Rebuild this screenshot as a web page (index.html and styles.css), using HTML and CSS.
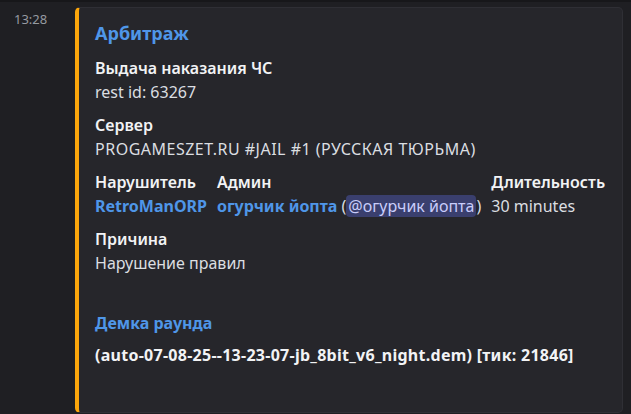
FILE: index.html
```html
<!DOCTYPE html>
<html lang="ru">
<head>
<meta charset="utf-8">
<link rel="stylesheet" href="styles.css">
</head>
<body>
<div class="topbar"></div>
<div class="message">
  <div class="time">13:28</div>
  <div class="embed">
    <div class="title">Арбитраж</div>
    <div class="fields">
      <div class="field">
        <div class="name">Выдача наказания ЧС</div>
        <div class="value">rest id: 63267</div>
      </div>
      <div class="field">
        <div class="name">Сервер</div>
        <div class="value caps">PROGAMESZET.RU #JAIL #1 (РУССКАЯ ТЮРЬМА)</div>
      </div>
      <div class="row">
        <div class="field">
          <div class="name">Нарушитель</div>
          <div class="value"><span class="link">RetroManORP</span></div>
        </div>
        <div class="field">
          <div class="name">Админ</div>
          <div class="value"><span class="link">огурчик йопта</span> (<span class="mention">@огурчик йопта</span>)</div>
        </div>
        <div class="field">
          <div class="name">Длительность</div>
          <div class="value">30 minutes</div>
        </div>
      </div>
      <div class="field">
        <div class="name">Причина</div>
        <div class="value">Нарушение правил</div>
      </div>
    </div>
    <div class="demo">
      <div class="demo-title">Демка раунда</div>
      <div class="desc">(auto-07-08-25--13-23-07-jb_8bit_v6_night.dem) [тик: 21846]</div>
    </div>
  </div>
</div>
</body>
</html>
```
FILE: styles.css
```css
html, body {
  margin: 0;
  padding: 0;
}
body {
  background: #1f1f23;
  font-family: "Noto Sans", "Liberation Sans", sans-serif;
  color: #dbdee1;
  height: 414px;
  overflow: hidden;
}
.topbar {
  height: 2px;
  background: #17171a;
}
.message {
  display: flex;
  padding: 5px 0 0 14px;
}
.time {
  width: 61px;
  flex: none;
  font-size: 13px;
  line-height: 22px;
  margin-top: 1px;
  color: #969aa1;
}
.embed {
  width: 548px;
  height: 406px;
  box-sizing: border-box;
  background: #26262b;
  border: 1px solid #2f2f35;
  border-left: 4px solid #fca60b;
  border-radius: 5px;
  padding: 12px 16px 0 16px;
}
.title {
  font-size: 18px;
  line-height: 26px;
  font-weight: 700;
  color: #4f96e8;
}
.fields {
  display: flex;
  flex-direction: column;
  gap: 11px;
  margin-top: 11px;
}
.row {
  display: flex;
  gap: 10px;
}
.name {
  font-size: 16px;
  line-height: 22px;
  font-weight: 600;
  color: #f2f3f5;
  margin-bottom: 2px;
}
.value {
  font-size: 16px;
  line-height: 22px;
  color: #dbdee1;
  white-space: nowrap;
}
.caps {
  letter-spacing: 0.5px;
}
.link {
  color: #4f96e8;
  font-weight: 700;
}
.mention {
  background: #3a3f6e;
  color: #c9cdfb;
  border-radius: 4px;
  padding: 0 2px;
}
.demo {
  margin-top: 38px;
}
.demo-title {
  font-size: 16px;
  line-height: 22px;
  font-weight: 700;
  color: #4f96e8;
}
.desc {
  margin-top: 10px;
  font-size: 16px;
  line-height: 22px;
  font-weight: 700;
  letter-spacing: 0.27px;
  color: #f2f3f5;
  white-space: nowrap;
}
```
